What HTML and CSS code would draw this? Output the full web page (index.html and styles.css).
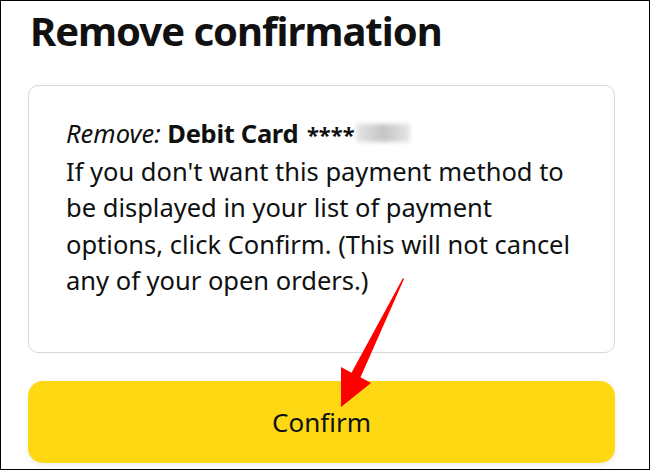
FILE: index.html
```html
<!DOCTYPE html>
<html>
<head>
<meta charset="utf-8">
<link rel="stylesheet" href="styles.css">
</head>
<body>
<div class="frame">
  <h1 class="title">Remove confirmation</h1>
  <div class="card">
    <p class="line"><em class="label">Remove:</em> <strong class="card-name">Debit Card</strong> <span class="mask">****</span><span class="blur"></span></p>
    <p class="msg">If you don't want this payment method to be displayed in your list of payment options, click Confirm. (This will not cancel any of your open orders.)</p>
  </div>
  <button class="confirm">Confirm</button>
  <svg class="arrow" width="650" height="470" viewBox="0 0 650 470">
    <polygon points="404,279 360.5,377.2 371,383 341,407 341,367 351.5,372.8 403,278" fill="#ff0000"/>
  </svg>
</div>
</body>
</html>
```
FILE: styles.css
```css
* { box-sizing: border-box; }
html, body { margin: 0; padding: 0; background: #fff; }
.frame {
  position: relative;
  width: 650px;
  height: 470px;
  border: 1px solid #000;
  padding: 0 34px 0 27px;
  display: flex;
  flex-direction: column;
  font-family: "Noto Sans", "Open Sans", sans-serif;
  color: #0f1111;
  overflow: hidden;
}
.title {
  margin: 0;
  padding: 3px 0 0 2px;
  font-size: 40px;
  letter-spacing: -1px;
  font-weight: 700;
  line-height: 54px;
  color: #111;
}
.card {
  margin-top: 27px;
  height: 268px;
  border: 1px solid #d5d9d9;
  border-radius: 10px;
  padding: 29px 40px 0 37px;
}
.line, .msg {
  margin: 0;
  font-size: 25.5px;
  line-height: 36.5px;
}
.label { font-style: italic; }
.card-name { font-weight: 700; letter-spacing: -0.3px; }
.mask { font-weight: 700; font-size: 22px; margin-left: 2px; }
.blur {
  display: inline-block;
  width: 54px;
  height: 18px;
  margin-left: 1px;
  vertical-align: 1px;
  background: linear-gradient(90deg, #e6e6e6, #c4c4c4 50%, #e6e6e6);
  filter: blur(2px);
}
.confirm {
  margin-top: 28px;
  height: 82px;
  border: none;
  border-radius: 15px;
  background: #ffd814;
  box-shadow: 0 2px 5px rgba(213, 217, 217, 0.5);
  font-family: inherit;
  font-size: 26px;
  color: #0f1111;
  padding: 0;
}
.arrow {
  position: absolute;
  left: -1px;
  top: -1px;
  pointer-events: none;
}
```
